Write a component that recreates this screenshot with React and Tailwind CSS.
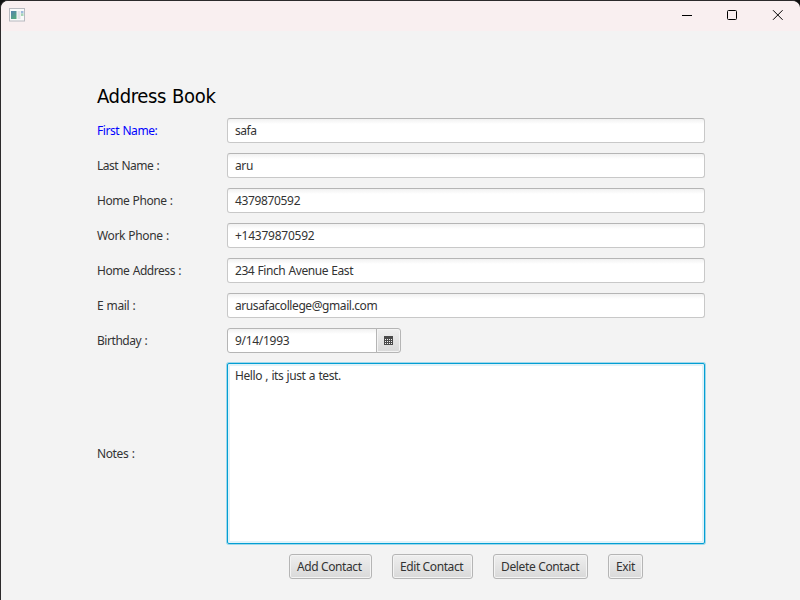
import React from "react";

const fields = [
  { label: "First Name:", value: "safa", ls: "tracking-[-0.44px]", vs: "tracking-[-0.45px]", color: "text-[#0000ff]" },
  { label: "Last Name :", value: "aru", ls: "tracking-[-0.48px]", vs: "tracking-[-0.4px]" },
  { label: "Home Phone :", value: "4379870592", ls: "tracking-[-0.45px]", vs: "tracking-[-0.35px]" },
  { label: "Work Phone :", value: "+14379870592", ls: "tracking-[-0.38px]", vs: "tracking-[-0.25px]" },
  { label: "Home Address :", value: "234 Finch Avenue East", ls: "tracking-[-0.44px]", vs: "tracking-[-0.44px]" },
  { label: "E mail :", value: "arusafacollege@gmail.com", ls: "tracking-[-0.4px]", vs: "tracking-[-0.42px]" },
];

const buttons = [
  { text: "Add Contact", size: "w-[83px]", ls: "tracking-[-0.4px]" },
  { text: "Edit Contact", size: "w-[81px]", ls: "tracking-[-0.4px]" },
  { text: "Delete Contact", size: "w-[95px]", ls: "tracking-[-0.35px]" },
  { text: "Exit", size: "w-[35px]", ls: "tracking-[-0.4px]" },
];

function AppIcon() {
  return (
    <svg width="16" height="14" viewBox="0 0 16 14" className="ml-2 mt-[7px]">
      <defs>
        <linearGradient id="pane" x1="0" y1="0" x2="0.6" y2="1">
          <stop offset="0" stopColor="#5583b0" />
          <stop offset="1" stopColor="#57a880" />
        </linearGradient>
      </defs>
      <rect x="0.5" y="0.5" width="15" height="12.5" fill="#fafafa" stroke="#b8bac0" />
      <rect x="2" y="3" width="5.5" height="8" fill="url(#pane)" />
      <rect x="8.5" y="3" width="3" height="8" fill="#e3e4e8" />
      <rect x="12" y="3" width="2.5" height="2.5" fill="#9db9dd" />
      <rect x="12" y="5.5" width="2.5" height="2.5" fill="#a5d6b6" />
    </svg>
  );
}

function TitleBar() {
  return (
    <header className="flex h-[30px] justify-between bg-[#f9eff0]">
      <AppIcon />
      <svg width="138" height="30" viewBox="0 0 138 30" fill="none" stroke="#000">
        <path d="M20 14.5h10" />
        <rect x="65.5" y="9.5" width="9" height="9" rx="1" />
        <path d="M111 9.2l9.6 9.6M120.6 9.2l-9.6 9.6" />
      </svg>
    </header>
  );
}

function CalendarIcon() {
  return (
    <svg width="9" height="9" viewBox="0 0 9 9" shapeRendering="crispEdges">
      <path fill="#4a4a4a" d="M0 0h9v9H0z" />
      <path stroke="#f0f0f0" strokeDasharray="1 1" d="M1 3.5h7M1 5.5h7M1 7.5h7" />
    </svg>
  );
}

export default function App() {
  return (
    <div className="h-[600px] w-[800px] overflow-hidden bg-[#101010]">
      <div className="h-[600px] w-[800px] overflow-hidden rounded-t-[8px] border-l border-t border-[#2c2a2b] bg-[#f3f3f3] font-['Noto_Sans','Open_Sans',sans-serif] text-[12px] leading-[16px] text-[#333333] [word-spacing:0.6px]">
        <TitleBar />
        <main className="ml-24 mt-[52px] w-[608px]">
          <h1 className="h-[35px] whitespace-nowrap pt-px font-['DejaVu_Sans_Condensed','DejaVu_Sans',sans-serif] text-[20px] leading-[24px] tracking-[-0.35px] text-black [font-stretch:condensed]">
            <span>Address Book</span>
          </h1>
          <div className="flex flex-col gap-[10px]">
            {fields.map((f) => (
              <div key={f.label} className="flex h-[25px] items-center">
                <label className={`w-[130px] whitespace-nowrap ${f.color || ""}`}>
                  <span className={f.ls}>{f.label}</span>
                </label>
                <div className="flex h-[25px] w-[478px] items-center rounded-[3px] border border-[#c8c8c8] border-t-[#b5b5b5] bg-white bg-linear-to-b from-[#f1f1f1] to-white to-[5px] px-[7px]">
                  <span className={f.vs}>{f.value}</span>
                </div>
              </div>
            ))}
            <div className="flex h-[25px] items-center">
              <label className="w-[130px]">
                <span className="tracking-[-0.45px]">Birthday :</span>
              </label>
              <div className="flex h-[25px] w-[150px] items-center rounded-l-[3px] border border-[#b5b5b5] bg-linear-to-b from-[#f1f1f1] to-white to-[5px] px-[7px]">
                <span className="tracking-[-0.3px]">9/14/1993</span>
              </div>
              <button className="-ml-px flex h-[25px] w-[25px] items-center justify-center rounded-r-[3px] border border-[#b5b5b5] bg-linear-to-b from-[#efefef] to-[#d9d9d9] shadow-[inset_0_0_0_1px_#f4f4f4]">
                <CalendarIcon />
              </button>
            </div>
            <div className="flex h-[181px] items-center">
              <label className="w-[130px]">
                <span className="tracking-[-0.38px]">Notes :</span>
              </label>
              <div className="h-[181px] w-[478px] rounded-[2px] border border-[#039ed3] bg-white px-[7px] pt-[4px] shadow-[0_0_0_1px_#a0d8ea,inset_0_0_0_2px_#e1f2f8]">
                <span className="tracking-[-0.42px]">Hello , its just a test.</span>
              </div>
            </div>
          </div>
          <div className="ml-48 mt-[10px] flex gap-5">
            {buttons.map((b) => (
              <button
                key={b.text}
                className={`flex h-[25px] items-center justify-start whitespace-nowrap rounded-[3px] border border-[#b5b5b5] bg-linear-to-b from-[#efefef] to-[#d9d9d9] pl-[7px] shadow-[inset_0_0_0_1px_#f4f4f4] ${b.size}`}
              >
                <span className={b.ls}>{b.text}</span>
              </button>
            ))}
          </div>
        </main>
      </div>
    </div>
  );
}
